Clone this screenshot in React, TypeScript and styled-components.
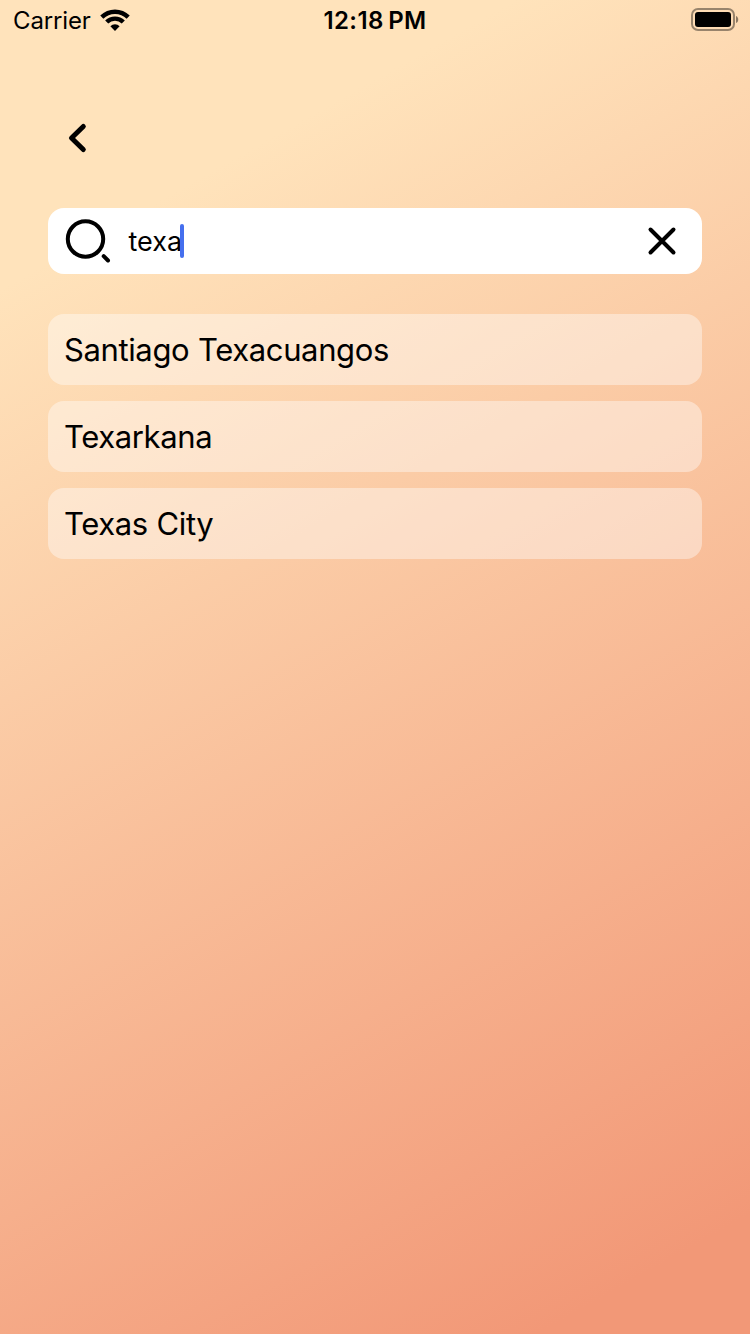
import React from "react";
import styled, { createGlobalStyle } from "styled-components";

const GlobalStyle = createGlobalStyle`
  * { box-sizing: border-box; }
  body { margin: 0; }
`;

const Screen = styled.main`
  width: 750px;
  height: 1334px;
  overflow: hidden;
  color: #000;
  font-family: Inter, "Liberation Sans", sans-serif;
  background: linear-gradient(150.65deg, #ffe3bb 16.5%, #f29877 93.2%);
`;

const StatusBar = styled.header`
  display: grid;
  grid-template-columns: 1fr auto 1fr;
  align-items: center;
  height: 40px;
  padding: 0 11px 0 13px;
`;

const Carrier = styled.div`
  display: flex;
  align-items: center;
  gap: 9px;
  font-size: 24px;
  line-height: 38px;
  letter-spacing: -0.15px;

  span {
    padding-top: 2px;
  }
`;

const Clock = styled.div`
  margin-right: 2px;
  padding-top: 2px;
  font-size: 24px;
  font-weight: 600;
  line-height: 38px;
  letter-spacing: 0.4px;
  word-spacing: -2px;
`;

const Battery = styled.svg`
  justify-self: end;
`;

const Content = styled.div`
  padding: 78px 48px 0;
`;

const BackButton = styled.button`
  display: flex;
  width: 60px;
  height: 40px;
  padding: 0 0 0 16px;
  align-items: center;
  border: 0;
  background: none;
`;

const SearchField = styled.div`
  display: flex;
  align-items: center;
  height: 66px;
  margin-top: 50px;
  padding: 0 22px 0 16px;
  border-radius: 16px;
  background: #fff;
`;

const Query = styled.span`
  margin-left: 16.5px;
  padding-top: 2px;
  font-size: 27px;
  line-height: 66px;
`;

const Caret = styled.span`
  width: 4px;
  height: 34px;
  margin-left: -2.5px;
  border-radius: 2px;
  background: #456fee;
`;

const ClearButton = styled.button`
  display: flex;
  margin-left: auto;
  padding: 0;
  border: 0;
  background: none;
`;

const Results = styled.ul`
  display: flex;
  flex-direction: column;
  gap: 16px;
  margin: 40px 0 0;
  padding: 0;
  list-style: none;
`;

const Result = styled.li`
  height: 71px;
  padding: 0 16px;
  border-radius: 16px;
  background: rgba(255, 255, 255, 0.4);
  font-size: 31px;
  line-height: 71px;
  letter-spacing: -0.38px;
  word-spacing: 0.5px;
`;

const cities = ["Santiago Texacuangos", "Texarkana", "Texas City"];

export default function App() {
  return (
    <Screen>
      <GlobalStyle />
      <StatusBar>
        <Carrier>
          <span>Carrier</span>
          <svg width="30" height="22" viewBox="0 0 30 22">
            <g fill="none" stroke="#000" strokeWidth="4.4">
              <path d="M1.8 8.1A18.8 18.8 0 0 1 28.2 8.1" />
              <path d="M6.7 13A11.8 11.8 0 0 1 23.3 13" />
            </g>
            <path d="M10.4 17.3a6.2 6.2 0 0 1 9.2 0L15 22Z" />
          </svg>
        </Carrier>
        <Clock>12:18 PM</Clock>
        <Battery width="48" height="24" viewBox="0 0 48 24">
          <rect x="1" y="1" width="42" height="21" rx="6" fill="none" stroke="#000" strokeOpacity=".4" strokeWidth="2" />
          <rect x="4" y="4" width="36" height="15" rx="3" />
          <path d="M45 8c3 1 3 6 0 7Z" fillOpacity=".45" />
        </Battery>
      </StatusBar>
      <Content>
        <BackButton aria-label="Back">
          <svg width="26" height="32" viewBox="0 0 26 32">
            <path d="M19.3 4.5 7.5 16l11.8 11.5" fill="none" stroke="#000" strokeWidth="5" strokeLinecap="round" strokeLinejoin="round" />
          </svg>
        </BackButton>
        <SearchField>
          <svg width="48" height="48" viewBox="0 0 48 48">
            <g fill="none" stroke="#000" strokeWidth="4" strokeLinecap="round">
              <circle cx="21.5" cy="22" r="17.7" />
              <path d="m39.7 39.2 4.3 4.3" />
            </g>
          </svg>
          <Query>texa</Query>
          <Caret />
          <ClearButton aria-label="Clear">
            <svg width="36" height="36" viewBox="0 0 36 36">
              <path d="m6.5 6.5 23 23M29.5 6.5l-23 23" stroke="#000" strokeWidth="4" strokeLinecap="round" />
            </svg>
          </ClearButton>
        </SearchField>
        <Results>
          {cities.map((city) => (
            <Result key={city}>{city}</Result>
          ))}
        </Results>
      </Content>
    </Screen>
  );
}
